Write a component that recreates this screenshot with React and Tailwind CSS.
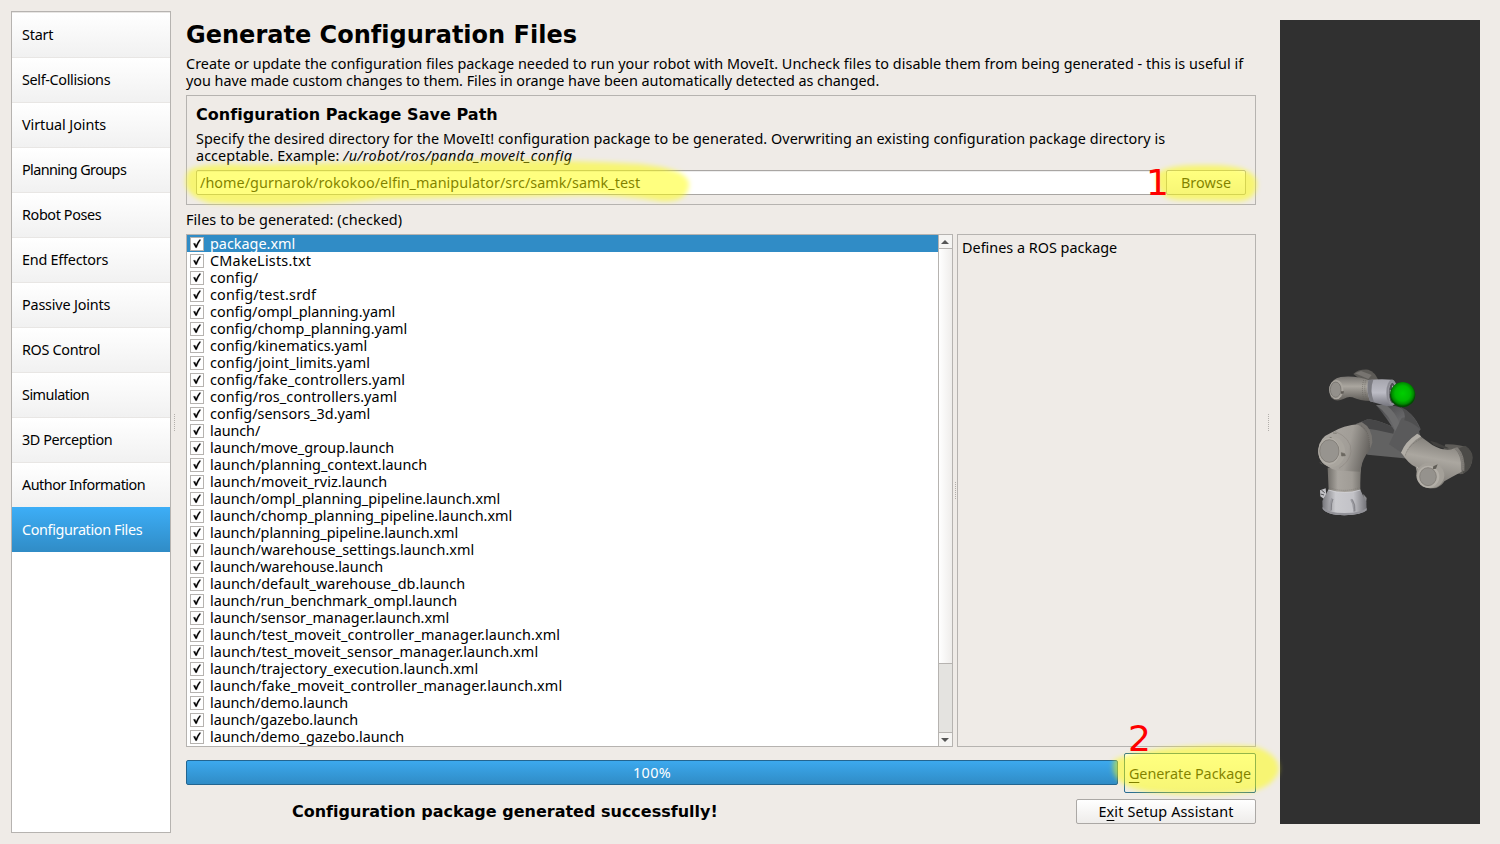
import { useLayoutEffect, useRef, useState } from "react";

const steps = [
  ["Start", 31], ["Self-Collisions", 88], ["Virtual Joints", 84], ["Planning Groups", 104],
  ["Robot Poses", 79], ["End Effectors", 86], ["Passive Joints", 88], ["ROS Control", 78],
  ["Simulation", 67], ["3D Perception", 90], ["Author Information", 123], ["Configuration Files", 120],
];

const files = [
  ["package.xml", 85], ["CMakeLists.txt", 101], ["config/", 48], ["config/test.srdf", 106],
  ["config/ompl_planning.yaml", 185], ["config/chomp_planning.yaml", 197],
  ["config/kinematics.yaml", 157], ["config/joint_limits.yaml", 160],
  ["config/fake_controllers.yaml", 195], ["config/ros_controllers.yaml", 187],
  ["config/sensors_3d.yaml", 160], ["launch/", 50], ["launch/move_group.launch", 184],
  ["launch/planning_context.launch", 217], ["launch/moveit_rviz.launch", 177],
  ["launch/ompl_planning_pipeline.launch.xml", 290], ["launch/chomp_planning_pipeline.launch.xml", 302],
  ["launch/planning_pipeline.launch.xml", 248], ["launch/warehouse_settings.launch.xml", 264],
  ["launch/warehouse.launch", 173], ["launch/default_warehouse_db.launch", 255],
  ["launch/run_benchmark_ompl.launch", 247], ["launch/sensor_manager.launch.xml", 239],
  ["launch/test_moveit_controller_manager.launch.xml", 350],
  ["launch/test_moveit_sensor_manager.launch.xml", 328],
  ["launch/trajectory_execution.launch.xml", 268],
  ["launch/fake_moveit_controller_manager.launch.xml", 352],
  ["launch/demo.launch", 138], ["launch/gazebo.launch", 148], ["launch/demo_gazebo.launch", 194],
];

// One line of text, tracked so that it fills the given width.
function Fit({ w, className = "", children }) {
  const ref = useRef(null);
  const [spacing, setSpacing] = useState(0);
  useLayoutEffect(() => {
    const el = ref.current;
    const natural = el.getBoundingClientRect().width - spacing * el.textContent.length;
    setSpacing((w + 0.2 - natural) / el.textContent.length);
  }, [w]);
  return (
    <span ref={ref} style={{ letterSpacing: spacing + "px" }} className={"inline-block whitespace-pre " + className}>
      {children}
    </span>
  );
}

function Check() {
  return (
    <span className="flex h-[14px] w-[14px] shrink-0 items-center justify-center border border-[#b6b3b0] bg-white">
      <svg width="12" height="12" viewBox="0 0 12 12">
        <path d="M2.3 5.4 L4.2 5.2 L5 7.6 Q6.4 4 8.6 1.6 L9.8 1.8 Q7.2 5.6 5.7 9.8 L4.6 9.8 Z" fill="#000" stroke="#000" strokeWidth=".2" />
      </svg>
    </span>
  );
}

function Grip() {
  return (
    <div className="flex w-px flex-col gap-px">
      {[0, 1, 2, 3, 4, 5, 6, 7, 8].map((i) => <i key={i} className="h-px w-px bg-[#b3afab]" />)}
    </div>
  );
}

function Robot() {
  return (
    <svg width="200" height="170" viewBox="-60 0 600 510">
      <defs>
        <linearGradient id="column" x1="0" x2="1">
          <stop offset="0" stopColor="#716e69" /><stop offset=".25" stopColor="#a9a59f" />
          <stop offset=".6" stopColor="#a09c96" /><stop offset="1" stopColor="#575551" />
        </linearGradient>
        <linearGradient id="shoulder" x1="0" y1=".2" x2="1" y2=".4">
          <stop offset="0" stopColor="#aeaaa4" /><stop offset=".6" stopColor="#a19d97" /><stop offset="1" stopColor="#625f5b" />
        </linearGradient>
        <linearGradient id="base" x1="0" x2="1">
          <stop offset="0" stopColor="#77777c" /><stop offset=".3" stopColor="#cacace" />
          <stop offset=".7" stopColor="#c2c2c7" /><stop offset="1" stopColor="#727277" />
        </linearGradient>
        <linearGradient id="wrist" x1="0" y1="0" x2="0" y2="1">
          <stop offset="0" stopColor="#777470" /><stop offset=".4" stopColor="#aaa69f" /><stop offset="1" stopColor="#5e5b57" />
        </linearGradient>
        <linearGradient id="flange" x1="0" y1="0" x2="0" y2="1">
          <stop offset="0" stopColor="#a5a5ad" /><stop offset=".5" stopColor="#bcbcc5" /><stop offset="1" stopColor="#75757d" />
        </linearGradient>
        <linearGradient id="elbow" x1=".6" y1="0" x2=".4" y2="1">
          <stop offset="0" stopColor="#77746f" /><stop offset=".45" stopColor="#aba7a0" /><stop offset="1" stopColor="#77746f" />
        </linearGradient>
        <linearGradient id="link" x1="0" y1="0" x2="1" y2="1">
          <stop offset="0" stopColor="#454547" /><stop offset=".5" stopColor="#666668" /><stop offset="1" stopColor="#555557" />
        </linearGradient>
        <radialGradient id="ball" cx=".5" cy=".45">
          <stop offset="0" stopColor="#00ce00" /><stop offset=".6" stopColor="#00b800" />
          <stop offset=".85" stopColor="#008b00" /><stop offset="1" stopColor="#004b00" />
        </radialGradient>
      </defs>
      <path d="M168 207 L205 192 Q240 197 286 219 L330 270 L335 312 L202 299 Z" fill="#626262" />
      <path d="M168 207 L205 192 Q240 197 284 219 L280 236 Q235 225 195 220 Z" fill="#464647" />
      <path d="M228 150 L285 153 Q339 165 362 223 L350 239 L286 231 Q265 195 228 150Z" fill="url(#link)" />
      <path d="M228 150 Q270 180 286 228 L303 215 Q287 170 258 150Z" fill="#6c6c6d" />
      <path d="M305 189 Q345 175 360 239 L305 293 L267 268 Z" fill="#5a5a5b" />
      <path d="M313 196 Q320 174 299 154 Q340 171 360 222 Q334 200 313 196Z" fill="#4f4f50" />
      <path d="M160 57 Q175 42 205 44 Q225 51 235 75 L190 80Z" fill="#5d5b57" />
      <path d="M165 55 L183 48 L215 60 L205 72Z" fill="#777470" />
      <path d="M88 96 Q96 71 122 66 Q165 60 211 77 Q202 105 212 138 Q180 138 157 127 Q145 123 132 131 Q108 143 94 128 Q86 115 88 96Z" fill="url(#wrist)" />
      <ellipse cx="109" cy="104" rx="21" ry="29" fill="#aaa69f" />
      <ellipse cx="107" cy="104" rx="16" ry="23" fill="#93908b" stroke="#6d6a65" strokeWidth="2" />
      <path d="M123 109 h9 l-2 7 h-7z" fill="#5e5a55" />
      <path d="M197 76 Q190 105 201 136 M191 75 Q183 105 192 134" fill="none" stroke="#66635e" strokeWidth="2" strokeDasharray="3 3" />
      <path d="M205 75 Q240 71 278 74 Q291 80 284 147 Q275 157 256 152 L210 139 Q198 107 205 75Z" fill="url(#flange)" />
      <path d="M205 75 L220 74 Q208 105 222 142 L210 139 Q198 107 205 75Z" fill="#7b7b81" />
      <ellipse cx="276" cy="113" rx="17" ry="39" fill="#8b8b93" />
      <ellipse cx="277" cy="114" rx="11" ry="32" fill="#4f4f55" stroke="#b2b2ba" strokeWidth="2" />
      <path d="M278 92 v10 M271 105 v12 M275 123 v10" stroke="#c3c3c8" strokeWidth="3" />
      <circle cx="308" cy="119" r="38" fill="url(#ball)" />
      <path d="M436 268 Q478 267 504 279 Q521 296 516 322 Q508 351 483 358 L445 350 L425 297Z" fill="#5e5c58" />
      <path d="M477 280 L495 272 Q519 288 518 307 Q514 345 489 357 Q495 315 477 280Z" fill="#4c4b48" />
      <path d="M351 236 Q371 251 397 270 Q438 293 463 280 Q489 302 485 350 Q458 364 433 379 Q426 391 409 399 Q374 405 356 378 L347 336 Q325 326 304 293Z" fill="url(#elbow)" />
      <path d="M303 293 Q315 260 352 236 L364 244 Q325 265 314 303Z" fill="#b2aea7" />
      <path d="M461 280 Q486 297 483 344 L493 349 Q497 300 472 277Z" fill="#807d78" />
      <path d="M316 301 Q326 267 370 248 M478 290 Q495 313 487 357" fill="none" stroke="#6d6963" strokeWidth="2" strokeDasharray="3 3" />
      <path d="M390 257 Q423 266 447 280 Q427 282 401 270Z" fill="#41403e" />
      <ellipse cx="391" cy="361" rx="42" ry="39" fill="#a4a099" />
      <ellipse cx="385" cy="365" rx="33" ry="33" fill="#b3afa8" />
      <ellipse cx="384" cy="365" rx="25" ry="27" fill="#95928d" stroke="#77736d" strokeWidth="2" />
      <path d="M400 334 L413 328 L408 341 L398 343Z" fill="#605d57" />
      <path d="M351 335 l4 6" stroke="#b9b5af" strokeWidth="3" />
      <path d="M83 338 Q110 342 133 316 L205 274 Q179 298 181 410 Q132 419 86 409Z" fill="url(#column)" />
      <path d="M55 282 Q59 247 92 234 Q130 210 179 207 Q211 217 216 258 Q214 282 198 300 Q184 323 181 350 L122 347 Q96 347 73 326 Q52 310 55 282Z" fill="url(#shoulder)" />
      <path d="M169 207 Q208 223 210 282 L217 263 Q218 219 185 201Z" fill="#777470" />
      <path d="M183 212 Q211 230 208 277" fill="none" stroke="#605c57" strokeWidth="2" strokeDasharray="3 3" />
      <path d="M105 229 Q155 250 153 290 Q149 320 117 340" fill="none" stroke="#88837c" strokeWidth="1.5" />
      <ellipse cx="95" cy="290" rx="40" ry="46" fill="#a9a59e" />
      <ellipse cx="88" cy="289" rx="32" ry="40" fill="#b2aea7" />
      <ellipse cx="88" cy="288" rx="29" ry="34" fill="#97948f" stroke="#77736d" strokeWidth="2" />
      <path d="M124 293 l10 3 l2 6 l-11 1z M89 247 l6 1 M99 234 l11 1 M60 322 l6 6" fill="#6a665f" stroke="#6a665f" strokeWidth="2" />
      <path d="M60 406 l17 -6 l2 20 l-8 11 l-10 -7z" fill="#c1c1c5" />
      <path d="M64 405 l10 8 M62 417 l10 3" stroke="#4e4e51" strokeWidth="3" />
      <path d="M190 417 l10 12 l-2 18 l-8 6z" fill="#89898c" />
      <path d="M85 404 Q135 420 181 404 Q189 422 199 442 L200 466 Q186 480 133 481 Q80 479 68 462 L67 438Z" fill="url(#base)" />
      <path d="M68 455 Q80 474 133 474 Q184 474 200 459 L200 466 Q186 480 133 481 Q80 479 68 462Z" fill="#929298" />
      <path d="M85 405 Q135 420 181 405" fill="none" stroke="#dadade" strokeWidth="2" />
      <path d="M96 430 Q89 444 91 468 M153 433 Q163 448 162 470" fill="none" stroke="#9a9aa0" strokeWidth="5" />
      <path d="M99 432 Q93 444 94 466 M157 433 Q167 448 165 469" fill="none" stroke="#55555a" strokeWidth="1.5" />
      <path d="M89 398 Q132 414 178 398" fill="none" stroke="#706c66" strokeWidth="1.5" strokeDasharray="3 3" />
    </svg>
  );
}

function Highlights() {
  return (
    <svg className="pointer-events-none absolute inset-0" width="1500" height="844" viewBox="0 0 1500 844">
      <defs><filter id="soft" x="-10%" y="-30%" width="120%" height="160%"><feGaussianBlur stdDeviation="2.6" /></filter></defs>
      <g fill="#ffff00" fillOpacity=".5">
        <path filter="url(#soft)" d="M188 171 Q200 162 250 165 L420 161 Q540 158 640 164 Q690 169 689 185 Q688 203 660 201 Q610 193 550 196 L380 199 Q290 207 210 203 Q178 195 188 171Z" />
        <path filter="url(#soft)" d="M1157 173 Q1170 164 1205 165 Q1255 164 1257 183 Q1257 203 1232 201 L1180 200 Q1154 200 1157 173Z" />
        <path filter="url(#soft)" d="M1114 760 Q1135 751 1170 748 Q1225 743 1257 747 Q1279 755 1279 770 Q1275 786 1250 792 Q1200 797 1150 792 Q1107 786 1114 760Z" />
      </g>
    </svg>
  );
}

export default function App() {
  return (
    <div className="relative flex h-[844px] w-[1500px] overflow-hidden bg-[#efebe7] pt-[11px] pl-[11px] font-['Noto_Sans',sans-serif] text-[14.4px] text-black">
      <nav className="h-[822px] w-[160px] shrink-0 border border-[#b6b3b0] bg-white">
        {steps.map(([label, w], i) => (
          <div
            key={label}
            className={
              "flex h-[45px] items-center pl-[10px] " +
              (i === 11
                ? "bg-linear-to-b from-[#3daef7] to-[#308cc6] text-white"
                : "border-t border-[#e8e6e4] bg-linear-to-b from-white to-[#f1f1f1]")
            }
          >
            <Fit w={w}>{label}</Fit>
          </div>
        ))}
      </nav>
      <div className="flex h-[822px] w-[15px] shrink-0 items-center pl-[3px]"><Grip /></div>

      <main className="flex w-[1070px] shrink-0 flex-col">
        <h1 className="mt-[9px] h-[31px] font-['DejaVu_Sans'] text-[24px] leading-[30px] font-bold"><Fit w={390}>Generate Configuration Files</Fit></h1>
        <div className="mt-[4px] flex flex-col items-start leading-[17px]">
          <Fit w={1057}>Create or update the configuration files package needed to run your robot with MoveIt. Uncheck files to disable them from being generated - this is useful if</Fit>
          <Fit w={693}>you have made custom changes to them. Files in orange have been automatically detected as changed.</Fit>
        </div>

        <section className="mt-[6px] h-[110px] border border-[#b6b3b0] px-[9px]">
          <h2 className="mt-[9px] h-[19px] font-['DejaVu_Sans'] text-[16px] leading-[20px] font-bold"><Fit w={301}>Configuration Package Save Path</Fit></h2>
          <div className="mt-[6px] flex flex-col items-start leading-[17px]">
            <Fit w={969}>Specify the desired directory for the MoveIt! configuration package to be generated. Overwriting an existing configuration package directory is</Fit>
            <div className="flex h-[17px]"><Fit w={147}>acceptable. Example: </Fit><Fit w={229} className="italic">/u/robot/ros/panda_moveit_config</Fit></div>
          </div>
          <div className="mt-[6px] flex h-[25px] gap-[6px]">
            <div className="flex w-[964px] items-center rounded-[2px] border border-[#a9a6a3] bg-white pl-[3px] shadow-[inset_0_1px_0_#eeeeee]"><Fit w={440}>/home/gurnarok/rokokoo/elfin_manipulator/src/samk/samk_test</Fit></div>
            <button className="w-[80px] rounded-[2px] border border-[#aba8a5] bg-linear-to-b from-white to-[#eeecea]"><Fit w={50}>Browse</Fit></button>
          </div>
        </section>

        <div className="mt-[6px] h-[17px] leading-[17px]"><Fit w={216}>Files to be generated: (checked)</Fit></div>
        <div className="mt-[6px] flex h-[513px]">
          <div className="flex w-[767px] border border-[#b6b3b0] bg-white">
            <div className="flex-1">
              {files.map(([name, w], i) => (
                <div key={name} className={"flex h-[17px] items-center gap-[6px] pl-[3px] leading-[17px] " + (i === 0 ? "bg-[#308cc6] text-white" : "")}>
                  <Check /><Fit w={w}>{name}</Fit>
                </div>
              ))}
            </div>
            <div className="flex w-[14px] flex-col border-l border-[#b6b3b0] bg-[#e4e3e0]">
              <div className="flex h-[14px] items-center border-b border-[#b6b3b0] bg-[#f5f4f2] pl-[2px]"><svg width="8" height="4"><path d="M0 4 L4 0 L8 4Z" fill="#555" /></svg></div>
              <div className="h-[415px] border-b border-[#b6b3b0] bg-linear-to-r from-white to-[#efedeb]" />
              <div className="flex-1" />
              <div className="flex h-[14px] items-center border-t border-[#b6b3b0] bg-[#f5f4f2] pl-[2px]"><svg width="8" height="4"><path d="M0 0 L8 0 L4 4Z" fill="#555" /></svg></div>
            </div>
          </div>
          <div className="flex w-[4px] items-center pl-[2px]"><Grip /></div>
          <div className="flex-1 border border-[#b6b3b0] pt-[4px] pl-[4px] leading-[17px]"><Fit w={155}>Defines a ROS package</Fit></div>
        </div>

        <div className="mt-[6px] flex h-[40px] gap-[6px]">
          <div className="mt-[7px] flex h-[25px] w-[932px] items-center justify-center rounded-[2px] border border-[#236590] bg-linear-to-b from-[#3ca9ee] to-[#308cc6] text-white"><Fit w={38}>100%</Fit></div>
          <button className="h-[40px] w-[132px] rounded-[2px] border border-[#286c93] bg-linear-to-b from-white to-[#edebe9]"><Fit w={122} className="pt-px"><span className="underline underline-offset-[3px]">G</span>enerate Package</Fit></button>
        </div>
        <div className="mt-[6px] flex h-[25px] items-center justify-between pl-[106px]">
          <div className="font-['DejaVu_Sans'] text-[16px] font-bold"><Fit w={425}>Configuration package generated successfully!</Fit></div>
          <button className="h-[25px] w-[180px] rounded-[2px] border border-[#aba8a5] bg-linear-to-b from-white to-[#eeecea] leading-[22px]"><Fit w={135}>E<span className="underline underline-offset-[3px]">x</span>it Setup Assistant</Fit></button>
        </div>
      </main>

      <div className="flex h-[822px] w-[24px] shrink-0 items-center pl-[12px]"><Grip /></div>
      <aside className="mt-[9px] h-[804px] w-[200px] shrink-0 bg-[#303030] pt-[335px]"><Robot /></aside>

      <Highlights />
      <span className="absolute top-[165px] left-[1146px] font-['DejaVu_Sans'] text-[36px] leading-none text-[#ff0000]">1</span>
      <span className="absolute top-[721px] left-[1128px] font-['DejaVu_Sans'] text-[36px] leading-none text-[#ff0000]">2</span>
    </div>
  );
}
